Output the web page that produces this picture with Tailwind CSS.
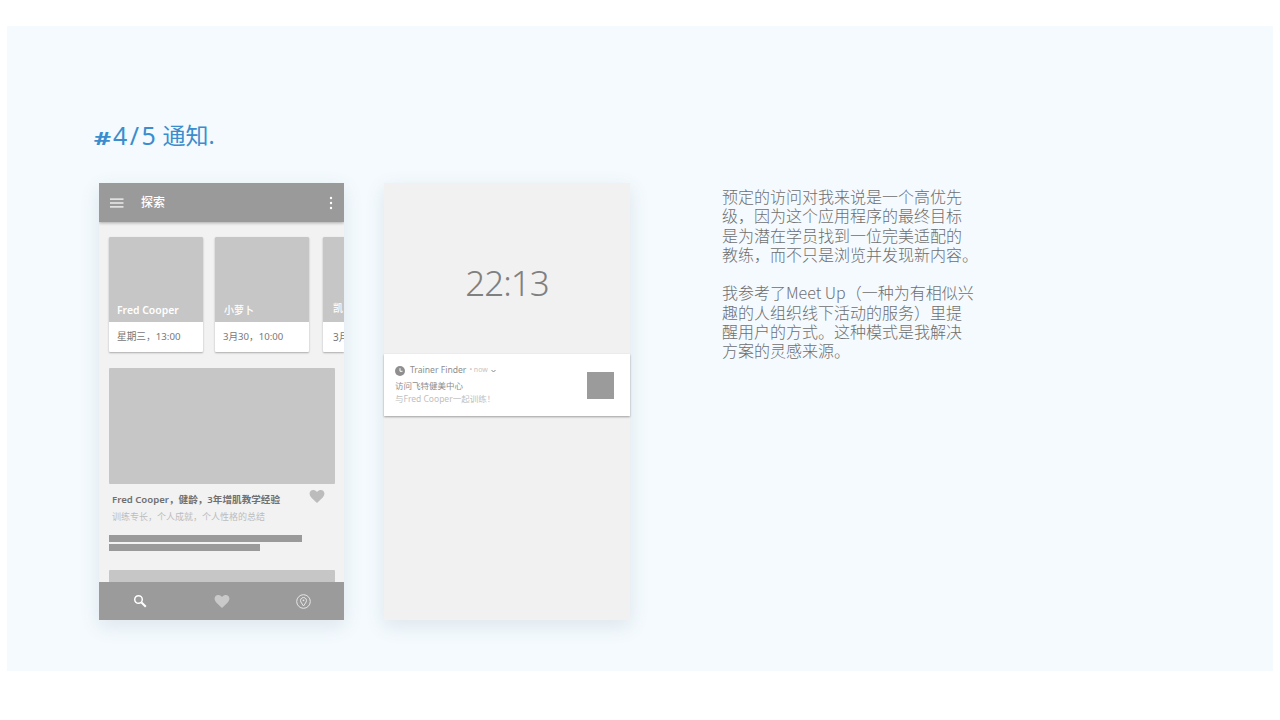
<!DOCTYPE html>
<html lang="zh">
<head>
<meta charset="utf-8">
<script src="https://cdn.jsdelivr.net/npm/@tailwindcss/browser@4"></script>
</head>
<body class="bg-white w-[1280px] h-[720px] overflow-hidden font-['Noto_Sans','Noto_Sans_CJK_SC',sans-serif]">
<div class="pt-[26px] pl-[7px]">
  <main class="w-[1266px] h-[645px] bg-[#f4fafe] pl-[88px] pt-[91px]">
    <h1 class="h-[36px] text-[23px] leading-[36px] text-[#3c8dce] flex items-center">
      <span class="font-bold text-[18px] mt-[5px] w-[15px] inline-block scale-x-[1.500] text-center">#</span><span class="text-[25px] ml-[3px] tracking-[2.500px]">4/5</span><span class="ml-[4px]">通知.</span>
    </h1>
    <div class="flex mt-[30px] ml-[4px]">
      <!-- phone 1 -->
      <section class="w-[245px] h-[437px] bg-[#f2f2f2] shadow-[0_6px_18px_rgba(90,110,130,0.14)] flex flex-col overflow-hidden relative">
        <header class="h-[39px] shrink-0 bg-[#9b9a9a] shadow-[0_1px_3px_rgba(0,0,0,0.3)] flex items-center pl-[11px] pr-[11px] relative z-10">
          <svg width="14" height="10" viewBox="0 0 14 10" fill="#fff"><rect y="0.500" width="13.500" height="1.200"/><rect y="4.400" width="13.500" height="1.200"/><rect y="8.300" width="13.500" height="1.200"/></svg>
          <span class="ml-[17px] text-[12px] font-medium text-white">探索</span>
          <svg class="ml-auto" width="4" height="14" viewBox="0 0 4 14" fill="#fff"><circle cx="2" cy="2" r="1.200"/><circle cx="2" cy="7" r="1.200"/><circle cx="2" cy="12" r="1.200"/></svg>
        </header>
        <div class="flex-1 pt-[15px] pl-[10px] overflow-hidden">
          <div class="flex w-[300px]">
            <div class="w-[94px] h-[115px] shrink-0 rounded-[1px] bg-white shadow-[0_1px_2px_rgba(0,0,0,0.3)] overflow-hidden">
              <div class="h-[85px] bg-[#c6c6c6] flex items-end pl-[8px] pb-[3px] text-[10.400px] font-semibold text-white">Fred Cooper</div>
              <div class="h-[30px] flex items-center pl-[8px] text-[9.700px] text-[#777]">星期三，13:00</div>
            </div>
            <div class="w-[94px] h-[115px] shrink-0 ml-[12px] rounded-[1px] bg-white shadow-[0_1px_2px_rgba(0,0,0,0.3)] overflow-hidden">
              <div class="h-[85px] bg-[#c6c6c6] flex items-end pl-[9px] pb-[4px] text-[10px] font-medium text-white">小萝卜</div>
              <div class="h-[30px] flex items-center pl-[8px] text-[9.600px] text-[#777]">3月30，10:00</div>
            </div>
            <div class="w-[21px] h-[115px] shrink-0 ml-[14px] rounded-l-[1px] bg-white shadow-[0_1px_2px_rgba(0,0,0,0.3)] overflow-hidden">
              <div class="h-[85px] bg-[#c6c6c6] flex items-end pl-[10px] pb-[6px] text-[10px] font-medium text-white whitespace-nowrap">凯</div>
              <div class="h-[30px] flex items-center pl-[10px] text-[10px] text-[#777] whitespace-nowrap">3月</div>
            </div>
          </div>
          <div class="mt-[16px] w-[226px] h-[116px] bg-[#c6c6c6] rounded-[1px]"></div>
          <div class="relative w-[226px] h-[51px]">
            <div class="absolute left-[3px] top-[8px] text-[9.600px] leading-[16px] font-semibold text-[#707070] whitespace-nowrap">Fred Cooper，健龄，3年增肌教学经验</div>
            <div class="absolute left-[3px] top-[26px] text-[9px] leading-[14px] text-[#bdbdbd] whitespace-nowrap">训练专长，个人成就，个人性格的总结</div>
            <svg class="absolute left-[200px] top-[6px]" width="16" height="13" viewBox="0 0 24 21" fill="#bcbcbc"><path d="M12 21 10.300 19.400C4.100 13.900 0 10.200 0 5.700 0 2.500 2.500 0 5.800 0 7.800 0 10 1 12 3.200 14 1 16.200 0 18.200 0 21.500 0 24 2.500 24 5.700 24 10.200 19.900 13.900 13.700 19.400Z"/></svg>
          </div>
          <div class="w-[193px] h-[7px] bg-[#9a9a9a]"></div>
          <div class="w-[151px] h-[7px] bg-[#9a9a9a] mt-[2px]"></div>
          <div class="mt-[19px] w-[226px] h-[20px] bg-[#c6c6c6] rounded-[1px]"></div>
        </div>
        <nav class="absolute left-0 right-0 bottom-0 h-[38px] bg-[#9b9b9b] grid grid-cols-3 place-items-center">
          <svg width="14" height="14" viewBox="0 0 14 14" fill="none" stroke="#fff"><circle cx="5.500" cy="5.500" r="3.800" stroke-width="1.500"/><path d="M8.500 8.500 12.800 12.800" stroke-width="2"/></svg>
          <svg class="ml-[1px]" width="16" height="13" viewBox="0 0 24 21" fill="#c9c9c9"><path d="M12 21 10.300 19.400C4.100 13.900 0 10.200 0 5.700 0 2.500 2.500 0 5.800 0 7.800 0 10 1 12 3.200 14 1 16.200 0 18.200 0 21.500 0 24 2.500 24 5.700 24 10.200 19.900 13.900 13.700 19.400Z"/></svg>
          <svg width="15" height="15" viewBox="0 0 15 15" fill="none" stroke="#e6e6e6"><circle cx="7.500" cy="7.500" r="6.800"/><path d="M7.500 12 4.900 8A3 3 0 1 1 10.100 8Z"/><circle cx="7.500" cy="6.300" r="0.900" fill="#e6e6e6" stroke="none"/></svg>
        </nav>
      </section>
      <!-- phone 2 -->
      <section class="w-[246px] h-[437px] ml-[40px] bg-[#f1f1f1] shadow-[0_6px_18px_rgba(90,110,130,0.14)] flex flex-col">
        <div class="h-[171px] pt-[76px] text-center text-[35px] tracking-[-1px] leading-[48px] font-light text-[#808080]">22:13</div>
        <div class="h-[62px] bg-white shadow-[0_1px_2px_rgba(0,0,0,0.35)] flex items-center pl-[11px] pr-[16px]">
          <div class="flex-1 min-w-0">
            <div class="flex items-center h-[14px] mb-[1px]">
              <svg width="10" height="10" viewBox="0 0 10 10"><circle cx="5" cy="5" r="5" fill="#8f8f8f"/><path d="M5 2.200V5.300H7.500" fill="none" stroke="#fff"/></svg>
              <span class="ml-[5px] text-[8.600px] text-[#8e8e8e]">Trainer Finder</span>
              <span class="ml-[3px] text-[7px] text-[#c4c4c4]">• now</span>
              <svg class="ml-[3px]" width="5" height="4" viewBox="0 0 5 4" fill="none" stroke="#888"><path d="M.5 1 2.500 3 4.500 1"/></svg>
            </div>
            <div class="text-[8.500px] leading-[13px] text-[#8e8e8e] whitespace-nowrap">访问飞特健美中心</div>
            <div class="text-[8.500px] leading-[13px] mb-[2px] text-[#c0c0c0] whitespace-nowrap">与Fred Cooper一起训练！</div>
          </div>
          <div class="w-[27px] h-[27px] bg-[#9b9b9b]"></div>
        </div>
      </section>
      <!-- text -->
      <article class="w-[256px] ml-[92px] mt-[4px] text-[16px] leading-[19.300px] font-light text-[#6e6e6e] font-['Noto_Sans_CJK_SC','Noto_Sans',sans-serif]">
        <p>预定的访问对我来说是一个高优先<br>级，因为这个应用程序的最终目标<br>是为潜在学员找到一位完美适配的<br>教练，而不只是浏览并发现新内容。</p>
        <p class="mt-[19.300px]">我参考了Meet Up（一种为有相似兴<br>趣的人组织线下活动的服务）里提<br>醒用户的方式。这种模式是我解决<br>方案的灵感来源。</p>
      </article>
    </div>
  </main>
</div>
</body>
</html>
